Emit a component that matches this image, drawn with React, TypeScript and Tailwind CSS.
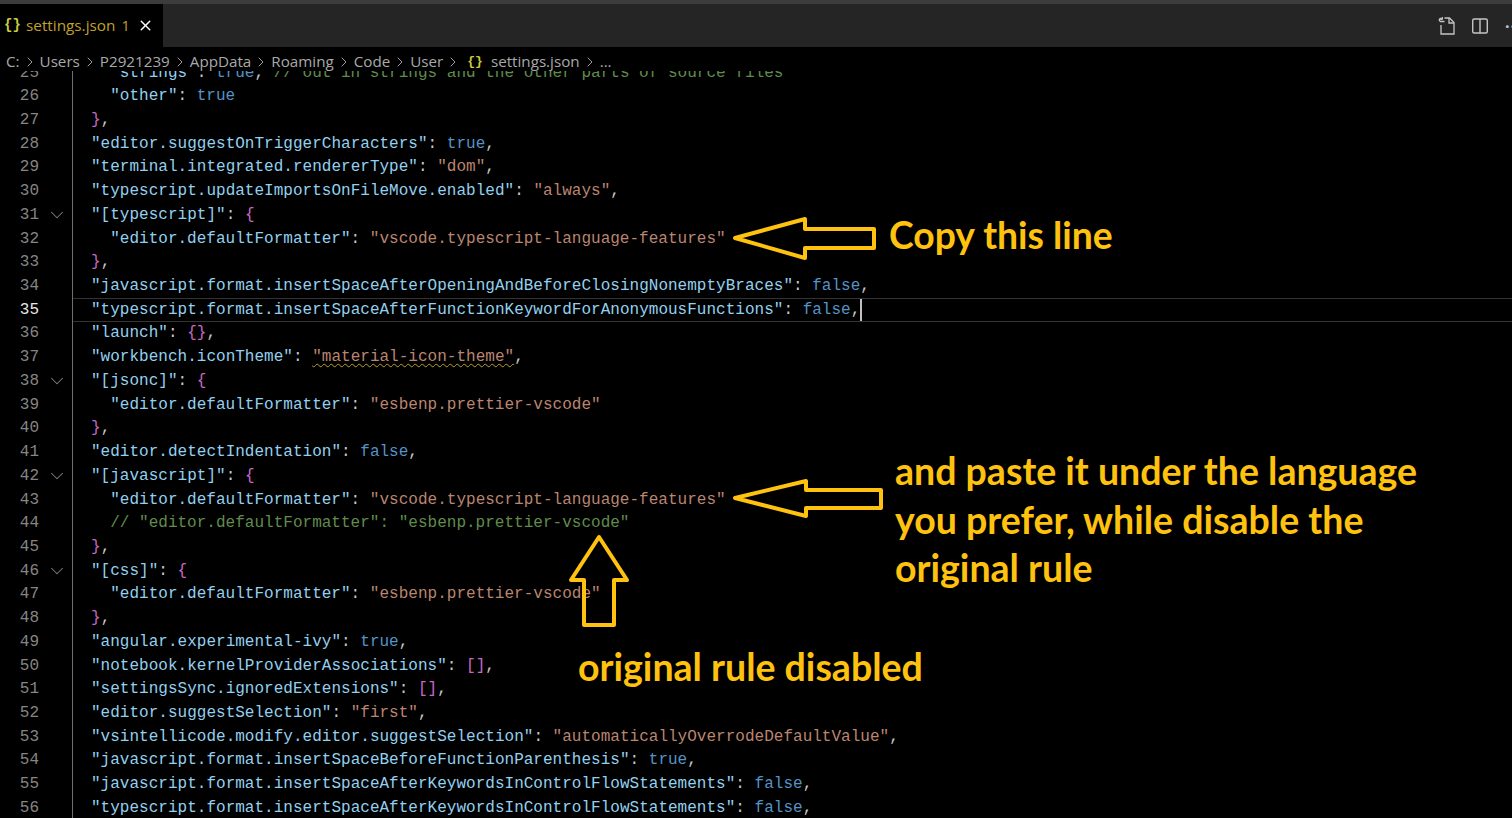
import React from "react";
import { ChevronRight, ChevronDown, X } from "lucide-react";

type Tok = [string, string];
const K = "text-[#93d0ef]";
const S = "text-[#bb8570]";
const B = "text-[#5593c8]";
const P = "text-[#c8c8c8]";
const M = "text-[#c868c4]";
const C = "text-[#618c4e]";

const key = (s: string): Tok => [`"${s}"`, K];
const str = (s: string): Tok => [`"${s}"`, S];
const colon: Tok = [": ", P];
const comma: Tok = [",", P];
const bool = (s: string): Tok => [s, B];

const row = (k: string, v: Tok[], end = true): Tok[] => [key(k), colon, ...v, ...(end ? [comma] : [])];

const lines: { n: number; i?: number; t: Tok[]; fold?: boolean; squiggle?: boolean; active?: boolean }[] = [
  { n: 25, i: 1, t: [key("strings"), colon, bool("true"), [", ", P], ["// out in strings and the other parts of source files", C]] },
  { n: 26, i: 1, t: [key("other"), colon, bool("true")] },
  { n: 27, t: [["}", M], comma] },
  { n: 28, t: row("editor.suggestOnTriggerCharacters", [bool("true")]) },
  { n: 29, t: row("terminal.integrated.rendererType", [str("dom")]) },
  { n: 30, t: row("typescript.updateImportsOnFileMove.enabled", [str("always")]) },
  { n: 31, fold: true, t: [key("[typescript]"), colon, ["{", M]] },
  { n: 32, i: 1, t: row("editor.defaultFormatter", [str("vscode.typescript-language-features")], false) },
  { n: 33, t: [["}", M], comma] },
  { n: 34, t: row("javascript.format.insertSpaceAfterOpeningAndBeforeClosingNonemptyBraces", [bool("false")]) },
  { n: 35, active: true, t: row("typescript.format.insertSpaceAfterFunctionKeywordForAnonymousFunctions", [bool("false")]) },
  { n: 36, t: [key("launch"), colon, ["{}", M], comma] },
  { n: 37, squiggle: true, t: [key("workbench.iconTheme"), colon, str("material-icon-theme"), comma] },
  { n: 38, fold: true, t: [key("[jsonc]"), colon, ["{", M]] },
  { n: 39, i: 1, t: row("editor.defaultFormatter", [str("esbenp.prettier-vscode")], false) },
  { n: 40, t: [["}", M], comma] },
  { n: 41, t: row("editor.detectIndentation", [bool("false")]) },
  { n: 42, fold: true, t: [key("[javascript]"), colon, ["{", M]] },
  { n: 43, i: 1, t: row("editor.defaultFormatter", [str("vscode.typescript-language-features")], false) },
  { n: 44, i: 1, t: [['// "editor.defaultFormatter": "esbenp.prettier-vscode"', C]] },
  { n: 45, t: [["}", M], comma] },
  { n: 46, fold: true, t: [key("[css]"), colon, ["{", M]] },
  { n: 47, i: 1, t: row("editor.defaultFormatter", [str("esbenp.prettier-vscode")], false) },
  { n: 48, t: [["}", M], comma] },
  { n: 49, t: row("angular.experimental-ivy", [bool("true")]) },
  { n: 50, t: [key("notebook.kernelProviderAssociations"), colon, ["[]", M], comma] },
  { n: 51, t: [key("settingsSync.ignoredExtensions"), colon, ["[]", M], comma] },
  { n: 52, t: row("editor.suggestSelection", [str("first")]) },
  { n: 53, t: row("vsintellicode.modify.editor.suggestSelection", [str("automaticallyOverrodeDefaultValue")]) },
  { n: 54, t: row("javascript.format.insertSpaceBeforeFunctionParenthesis", [bool("true")]) },
  { n: 55, t: row("javascript.format.insertSpaceAfterKeywordsInControlFlowStatements", [bool("false")]) },
  { n: 56, t: row("typescript.format.insertSpaceAfterKeywordsInControlFlowStatements", [bool("false")]) },
];

const crumbs = ["C:", "Users", "P2921239", "AppData", "Roaming", "Code", "User"];

function Sep() {
  return <ChevronRight className="w-[16px] h-[16px] text-[#a9a9a9] mx-[2px] shrink-0" strokeWidth={1.4} />;
}

function Line({ l }: { l: (typeof lines)[number] }) {
  return (
    <div className="flex h-[23.73px] items-center whitespace-pre">
      <div className={`w-[39px] text-right ${l.active ? "text-[#e6e6e6]" : "text-[#858585]"}`}>{l.n}</div>
      <div className="w-[33px] flex justify-center pl-[3px]">
        {l.fold && <ChevronDown className="w-[22px] h-[22px] text-[#7f7f7f]" strokeWidth={1.1} />}
      </div>
      <div
        className={`flex-1 h-full flex items-center border-l border-[#6f6f6f] pl-[18px] ${
          l.active ? "shadow-[inset_0_1px_0_#333333,inset_0_-1px_0_#333333]" : ""
        }`}
      >
        {l.i ? <span className="w-[19.2px]" /> : null}
        {l.t.map((t, i) => (
          <span
            key={i}
            className={`${t[1]} ${l.squiggle && i === 2 ? "underline decoration-wavy decoration-[#b9a227] decoration-1 underline-offset-2" : ""}`}
          >
            {t[0]}
          </span>
        ))}
        {l.active && <span className="w-[2px] h-[22px] bg-[#c0c0c0]" />}
      </div>
    </div>
  );
}

export default function App() {
  return (
    <div className="relative w-[1512px] h-[818px] overflow-hidden bg-black flex flex-col font-['Open_Sans',sans-serif]">
      <div className="h-[4px] bg-[#3c3c3c] shrink-0" />
      <div className="h-[43px] bg-[#252526] flex items-center justify-between shrink-0">
        <div className="w-[163px] h-full bg-black flex items-center pl-[4px]">
          <span className="text-[#cbcb41] font-bold text-[14px] w-[22px] font-['Liberation_Mono',monospace]">{"{}"}</span>
          <span className="text-[#c2a02c] text-[15.3px]">settings.json</span>
          <span className="text-[#c2a02c] text-[14.5px] ml-[6px]">1</span>
          <X className="w-[17px] h-[17px] text-white ml-[7px]" strokeWidth={2} />
        </div>
        <div className="flex items-center gap-[14px] -mr-[13px]">
          <svg width="20" height="20" viewBox="0 0 20 20" fill="none" stroke="#c5c5c5" strokeWidth="1.3">
            <path d="M4 9v9h13V6.5L12.5 2H7.5" />
            <path d="M12 2v5h5" />
            <path d="M7.5 5.5H3.5a1.6 1.6 0 1 1 1.6-2.6" />
            <path d="M3 3 5.2 3.2 5.4 1" />
          </svg>
          <svg width="18" height="18" viewBox="0 0 18 18" fill="none" stroke="#c5c5c5" strokeWidth="1.4">
            <rect x="1.7" y="2" width="14.6" height="14" rx="1.5" />
            <path d="M9 2v14" />
          </svg>
          <span className="text-[#c5c5c5] text-[16px] w-[20px] font-bold tracking-[1px] ml-[2px]">···</span>
        </div>
      </div>
      <div className="h-[24px] flex items-center pl-[6px] pt-[5px] text-[15.2px] text-[#a9a9a9] shrink-0 whitespace-pre">
        {crumbs.map((c) => (
          <React.Fragment key={c}>
            <span>{c}</span>
            <Sep />
          </React.Fragment>
        ))}
        <span className="text-[#cbcb41] font-bold text-[13px] font-['Liberation_Mono',monospace] mx-[4px]">{"{}"}</span>
        <span className="ml-[4px]">settings.json</span>
        <Sep />
        <span>...</span>
      </div>
      <div className="flex-1 overflow-hidden font-['Liberation_Mono',monospace] text-[16px] tracking-[0.015px]">
        <div className="-mt-[10.3px]">
          {lines.map((l) => (
            <Line key={l.n} l={l} />
          ))}
        </div>
      </div>

      <svg className="absolute inset-0 pointer-events-none" width="1512" height="818" fill="none" stroke="#ffc20e" strokeWidth="4" strokeLinejoin="round">
        <path d="M735 238 805 219V229H874V248H805V258Z" />
        <path d="M735 498 806 481V490H881V508H806V516Z" />
        <path d="M599 537 627 580H614V625H584V580H571Z" />
      </svg>

      <div className="absolute left-[889px] top-[213px] text-[37.3px] leading-[44px] font-bold text-[#ffc20e] font-['Lato',sans-serif] whitespace-pre">Copy this line</div>
      <div className="absolute left-[895px] top-[447px] text-[37.5px] leading-[48.5px] font-bold text-[#ffc20e] font-['Lato',sans-serif] whitespace-pre">
        {"and paste it under the language\nyou prefer, while disable the\noriginal rule"}
      </div>
      <div className="absolute left-[578px] top-[645px] text-[37.5px] leading-[44px] font-bold text-[#ffc20e] font-['Lato',sans-serif] whitespace-pre">original rule disabled</div>
    </div>
  );
}
